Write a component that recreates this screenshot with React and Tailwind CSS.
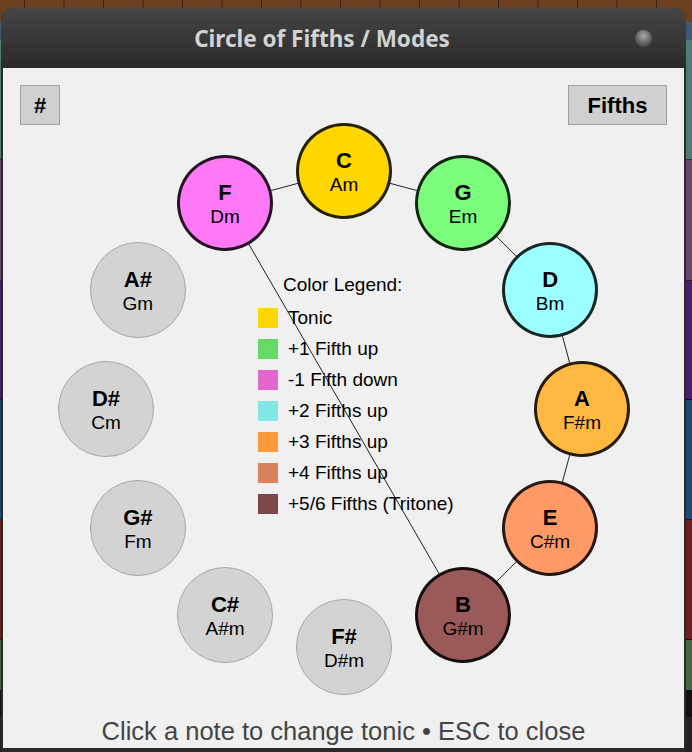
import React from 'react';

const R = 238;
const CX = 341;
const CY = 284;

// circle of fifths, clockwise from the top
const NOTES = [
    {note: 'C', minor: 'Am', cls: 'bg-[#ffd700] border-[3px] border-black/85'},
    {note: 'G', minor: 'Em', cls: 'bg-[#7cfc7c] border-[3px] border-black/85'},
    {note: 'D', minor: 'Bm', cls: 'bg-[#9cffff] border-[3px] border-black/85'},
    {note: 'A', minor: 'F#m', cls: 'bg-[#ffb940] border-[3px] border-black/85'},
    {note: 'E', minor: 'C#m', cls: 'bg-[#ff9966] border-[3px] border-black/85'},
    {note: 'B', minor: 'G#m', cls: 'bg-[#9a5a5a] border-[3px] border-black/85'},
    {note: 'F#', minor: 'D#m', cls: 'bg-[#d3d3d3] border border-[#a8a8a8]'},
    {note: 'C#', minor: 'A#m', cls: 'bg-[#d3d3d3] border border-[#a8a8a8]'},
    {note: 'G#', minor: 'Fm', cls: 'bg-[#d3d3d3] border border-[#a8a8a8]'},
    {note: 'D#', minor: 'Cm', cls: 'bg-[#d3d3d3] border border-[#a8a8a8]'},
    {note: 'A#', minor: 'Gm', cls: 'bg-[#d3d3d3] border border-[#a8a8a8]'},
    {note: 'F', minor: 'Dm', cls: 'bg-[#ff78f6] border-[3px] border-black/85'},
];

const LINKS = [[11, 0], [0, 1], [1, 2], [2, 3], [3, 4], [4, 5], [5, 11]];

const LEGEND = [
    {label: 'Tonic', cls: 'bg-[#ffd700]'},
    {label: '+1 Fifth up', cls: 'bg-[#66da66]'},
    {label: '-1 Fifth down', cls: 'bg-[#e366cc]'},
    {label: '+2 Fifths up', cls: 'bg-[#80e7e5]'},
    {label: '+3 Fifths up', cls: 'bg-[#ff9a38]'},
    {label: '+4 Fifths up', cls: 'bg-[#d9805c]'},
    {label: '+5/6 Fifths (Tritone)', cls: 'bg-[#7d4848]'},
];

const pos = (i) => {
    const a = (i * Math.PI) / 6;
    return {x: CX + R * Math.sin(a), y: CY - R * Math.cos(a)};
};

const Backdrop = () => (
    <div className="absolute inset-0 flex flex-col">
        <div className="h-[22px] bg-[#6b4020] bg-[linear-gradient(90deg,#3b230f_1px,transparent_1px)] bg-[length:39.5px_100%] bg-[position:24px_0]" />
        <div className="h-[18px] bg-[#3f5a78]" />
        <div className="h-[120px] bg-[#4e7a78] border-b border-[#2a3a3a]" />
        <div className="h-[121px] bg-[#6a4668] border-b border-[#2a1a2a]" />
        <div className="h-[119px] bg-[#451f6e] border-b border-[#1a0a2a]" />
        <div className="h-[120px] bg-[#1d4a6e] border-b border-[#0e2030]" />
        <div className="h-[120px] bg-[#6a1e22] border-b border-[#2a0a0a]" />
        <div className="h-[50px] bg-[#436644]" />
        <div className="h-[27px] bg-[#111111]" />
        <div className="flex-1 bg-[#222222]" />
    </div>
);

const Note = ({item, i}) => {
    const p = pos(i);
    return (
        <div
            className={`absolute w-[96px] h-[96px] rounded-full flex flex-col items-center justify-center pt-[2px] text-black ${item.cls}`}
            style={{left: p.x - 48, top: p.y - 48}}
        >
            <div className="text-[22px] leading-[24px] font-bold">{item.note}</div>
            <div className="mt-[2px] text-[19px] leading-[20px]">{item.minor}</div>
        </div>
    );
};

export default function App() {
    return (
        <div className="relative w-[692px] h-[752px] overflow-hidden font-['Liberation_Sans',Arial,sans-serif]">
            <Backdrop />

            <div className="relative mt-[8px] ml-[1px] w-[685px] h-[760px] rounded-t-[12px] bg-[#2a2a2a] flex flex-col">
                <header className="h-[60px] shrink-0 rounded-t-[12px] bg-[linear-gradient(#454545,#2a2a2a)] flex items-center">
                    <div className="flex-1 pl-[8px] pt-[2px] text-center text-[22.5px] font-bold text-[#d2d2d2] font-['Noto_Sans','Open_Sans',sans-serif]">
                        Circle of Fifths / Modes
                    </div>
                    <div className="w-[17px] h-[17px] mr-[34px] rounded-full bg-[radial-gradient(circle_at_50%_35%,#a8a8a8,#5a5a5a_60%,#333_100%)]" />
                </header>

                <div className="mx-[2px] h-[680px] bg-[#f0f0f0] flex flex-col">
                    <div className="pt-[17px] px-[17px] flex justify-between">
                        <button className="w-[40px] h-[40px] bg-[#d0d0d0] border border-[#a0a0a0] text-[22px] font-bold text-black flex items-center justify-center">
                            #
                        </button>
                        <button className="w-[99px] h-[40px] bg-[#d0d0d0] border border-[#a0a0a0] text-[22px] font-bold text-black flex items-center justify-center">
                            Fifths
                        </button>
                    </div>

                    <div className="relative h-[592px]">
                        <svg className="absolute inset-0" width="681" height="592">
                            {LINKS.map(([a, b]) => {
                                const p = pos(a);
                                const q = pos(b);
                                return (
                                    <line key={`${a}-${b}`} x1={p.x} y1={p.y} x2={q.x} y2={q.y} stroke="#222" strokeWidth="1" />
                                );
                            })}
                        </svg>

                        <div className="absolute left-[255px] top-[150px] flex flex-col text-[19px] text-black">
                            <div className="h-[20px] leading-[20px] pl-[25px]">Color Legend:</div>
                            <div className="mt-[13px] flex flex-col gap-[11px]">
                                {LEGEND.map((row) => (
                                    <div key={row.label} className="h-[20px] flex items-center gap-[10px]">
                                        <div className={`w-[20px] h-[20px] ${row.cls}`} />
                                        <span className="leading-[20px]">{row.label}</span>
                                    </div>
                                ))}
                            </div>
                        </div>

                        {NOTES.map((item, i) => (
                            <Note key={item.note} item={item} i={i} />
                        ))}
                    </div>

                    <div className="h-[28px] leading-[28px] text-center text-[25.5px] text-[#444]">
                        Click a note to change tonic • ESC to close
                    </div>
                </div>
            </div>
        </div>
    );
}
